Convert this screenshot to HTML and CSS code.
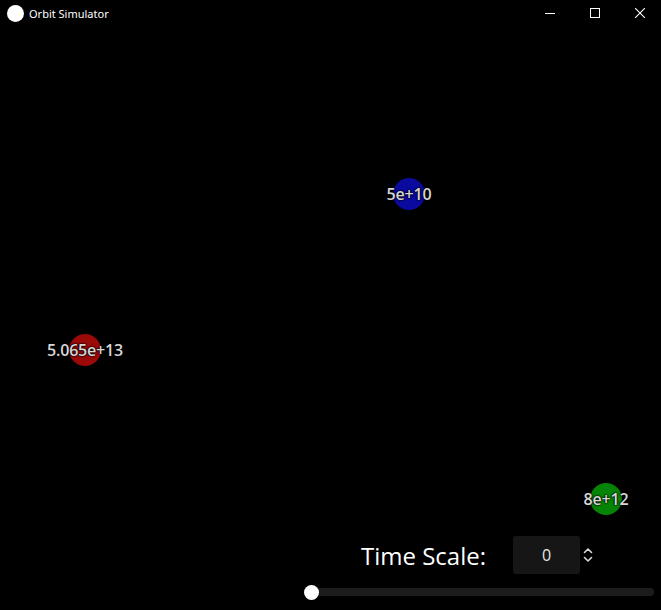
FILE: index.html
```html
<!DOCTYPE html>
<html>
<head>
<meta charset="utf-8">
<title>Orbit Simulator</title>
<link rel="stylesheet" href="styles.css">
</head>
<body>
<div class="window">
  <header class="titlebar">
    <span class="app-icon"></span>
    <span class="title">Orbit Simulator</span>
    <div class="win-controls">
      <span class="wc">
        <svg width="10" height="10" viewBox="0 0 10 10"><path d="M0 5.5H10" stroke="#fff" stroke-width="1"/></svg>
      </span>
      <span class="wc">
        <svg width="10" height="10" viewBox="0 0 10 10"><rect x="0.5" y="0.5" width="9" height="9" fill="none" stroke="#fff" stroke-width="1"/></svg>
      </span>
      <span class="wc">
        <svg width="10" height="10" viewBox="0 0 10 10"><path d="M0 0L10 10M10 0L0 10" stroke="#fff" stroke-width="1.1"/></svg>
      </span>
    </div>
  </header>
  <main class="main">
    <div class="canvas">
      <div class="body blue" style="left:409px; top:168px;"><span class="dot"></span><span class="label">5e+10</span></div>
      <div class="body red" style="left:85px; top:324px;"><span class="dot"></span><span class="label">5.065e+13</span></div>
      <div class="body green" style="left:606px; top:473px;"><span class="dot"></span><span class="label">8e+12</span></div>
    </div>
    <div class="controls">
      <div class="row">
        <span class="ts-label">Time Scale:</span>
        <div class="spin">
          <span class="spin-box">0</span>
          <svg class="spin-arrows" width="10" height="16" viewBox="0 0 10 16"><path d="M1.5 5.5L5 2L8.5 5.5M1.5 10.5L5 14L8.5 10.5" fill="none" stroke="#d8d8d8" stroke-width="1.6" stroke-linecap="round" stroke-linejoin="round"/></svg>
        </div>
      </div>
      <div class="slider">
        <span class="thumb"></span>
      </div>
    </div>
  </main>
</div>
</body>
</html>
```
FILE: styles.css
```css
* { box-sizing: border-box; }
html, body { margin: 0; padding: 0; background: #000; }
body { font-family: "Open Sans", "Noto Sans", sans-serif; color: #fff; }
.window { width: 661px; height: 610px; display: flex; flex-direction: column; overflow: hidden; }
.titlebar { height: 26px; display: flex; align-items: center; padding-left: 7px; flex-shrink: 0; }
.app-icon { width: 17px; height: 17px; border-radius: 50%; background: #fff; margin-right: 5px; }
.title { font-family: "Noto Sans", "Open Sans", sans-serif; font-size: 11px; color: #fff; margin-top: 1px; }
.win-controls { margin-left: auto; display: flex; align-items: center; margin-right: 16px; }
.wc { width: 10px; height: 10px; display: flex; margin-left: 35px; }
.wc:first-child { margin-left: 0; }
.wc svg { display: block; }
.main { flex: 1; display: flex; flex-direction: column; }
.canvas { flex: 1; position: relative; }
.body { position: absolute; width: 0; height: 0; }
.dot { position: absolute; left: -16px; top: -16px; width: 32px; height: 32px; border-radius: 50%; }
.blue .dot { background: #0b0a9e; }
.red .dot { background: #9c0909; }
.green .dot { background: #068406; }
.label { position: absolute; left: 0; top: 0; transform: translate(-50%, -50%); white-space: nowrap; font-size: 16px; font-weight: 600; color: #d6d6d6; text-shadow: 0 0 2px #000, 0 0 2px #000, 0 0 1px #000; letter-spacing: -0.2px; }
.controls { width: 349px; margin-left: auto; margin-right: 7px; display: flex; flex-direction: column; align-items: stretch; padding-bottom: 14px; }
.row { display: flex; align-items: center; height: 38px; padding-left: 56px; }
.ts-label { font-size: 24px; color: #fff; margin-right: 27px; }
.spin { display: flex; align-items: center; }
.spin-box { width: 67px; height: 38px; background: #161616; border-radius: 3px; display: flex; align-items: center; justify-content: center; font-size: 16px; color: #e6e6e6; }
.spin-arrows { margin-left: 3px; display: block; }
.slider { height: 8px; margin-top: 14px; background: #1c1c1c; border-radius: 4px; position: relative; }
.thumb { position: absolute; left: -1px; top: -3.5px; width: 15px; height: 15px; border-radius: 50%; background: #fff; }
```
